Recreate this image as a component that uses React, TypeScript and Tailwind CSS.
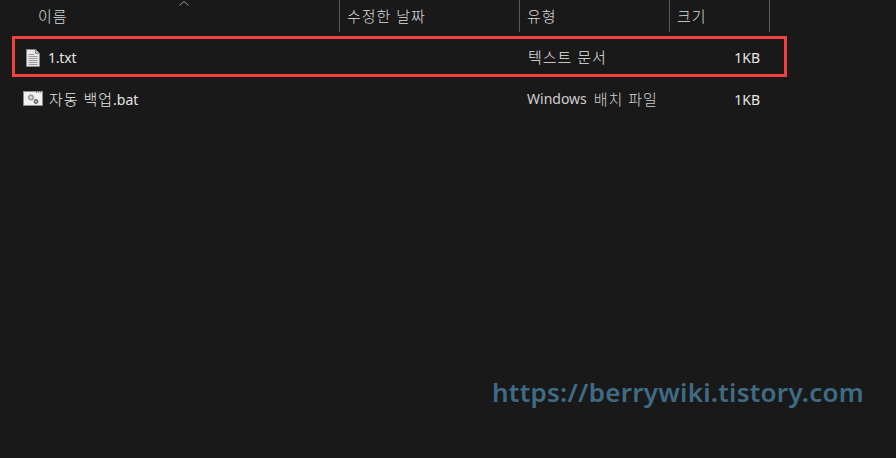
const font = { fontFamily: '"Noto Sans", "Noto Sans CJK KR", sans-serif' };

function TxtIcon() {
  return (
    <svg width="16" height="18" viewBox="0 0 16 18" className="block">
      <path d="M1.5 .5H10.5L14.5 4.5V17.5H1.5Z" fill="#e8e8e8" stroke="#8a8a8a" />
      <path d="M10.5 .5V4.5H14.5" fill="#bdbdbd" stroke="#8a8a8a" />
      <path d="M3.5 5.5H9M3.5 7.5H12.5M3.5 9.5H12.5M3.5 11.5H12.5M3.5 13.5H12.5M3.5 15.5H12.5" stroke="#9a9a9a" />
    </svg>
  );
}

function BatIcon() {
  return (
    <svg width="20" height="16" viewBox="0 0 20 16" className="block">
      <rect x=".5" y=".5" width="19" height="14" fill="#f0f0f0" stroke="#8c8c8c" />
      <path d="M13 1.5H14M15 1.5H16M17 1.5H18" stroke="#8c8c8c" />
      <circle cx="8" cy="6.5" r="2.6" fill="#b5b5b5" stroke="#8a8a8a" />
      <circle cx="8" cy="6.5" r=".9" fill="#f0f0f0" />
      <circle cx="13" cy="10.5" r="2" fill="#7a7a7a" stroke="#666" />
      <circle cx="13" cy="10.5" r=".7" fill="#f0f0f0" />
    </svg>
  );
}

function K({ children }: { children: React.ReactNode }) {
  return <span className="text-[15px] font-light tracking-[1px]">{children}</span>;
}

function HeaderCell({ label, className }: { label: string; className: string }) {
  return (
    <div className={`flex h-full items-center border-r border-[#5a5a5a] text-[#dcdcdc] ${className}`}>
      <K>{label}</K>
    </div>
  );
}

export default function App() {
  return (
    <div className="relative flex h-[458px] w-[896px] flex-col overflow-hidden bg-[#191919] text-[14px] text-[#e6e6e6]" style={font}>
      <div className="relative flex h-[32px] w-[770px]">
        <HeaderCell label="이름" className="w-[340px] pl-[38px]" />
        <HeaderCell label="수정한 날짜" className="w-[180px] pl-[7px]" />
        <HeaderCell label="유형" className="w-[150px] pl-[7px]" />
        <HeaderCell label="크기" className="w-[100px] pl-[7px]" />
        <svg width="12" height="7" viewBox="0 0 12 7" className="absolute left-[178px] top-0">
          <path d="M1.5 5.5L6 1.5L10.5 5.5" fill="none" stroke="#9a9a9a" />
        </svg>
      </div>
      <div className="ml-[12px] mt-[4px] flex h-[41px] w-[775px] items-center border-[3px] border-[#f04040] pt-[2px]">
        <div className="flex w-[513px] items-center pl-[10px]">
          <TxtIcon />
          <span className="ml-[7px] tracking-[-0.2px]">1.txt</span>
        </div>
        <div className="w-[142px]"><K>텍스트 문서</K></div>
        <div className="w-[90px] text-right">1KB</div>
      </div>
      <div className="ml-[12px] mt-[2px] flex h-[40px] w-[775px] items-center">
        <div className="flex w-[515px] items-center pl-[11px]">
          <BatIcon />
          <span className="ml-[6px]"><K>자동 백업</K>.bat</span>
        </div>
        <div className="flex w-[143px] text-[#d0d0d0]">Windows<span className="ml-[7px]"><K>배치 파일</K></span></div>
        <div className="w-[90px] text-right">1KB</div>
      </div>
      <div className="absolute left-[492px] top-[375px] text-[26px] font-semibold leading-[34px] tracking-[0.25px] text-[#3f6b85]" style={{ fontFamily: '"Noto Sans", sans-serif' }}>
        https://berrywiki.tistory.com
      </div>
    </div>
  );
}
